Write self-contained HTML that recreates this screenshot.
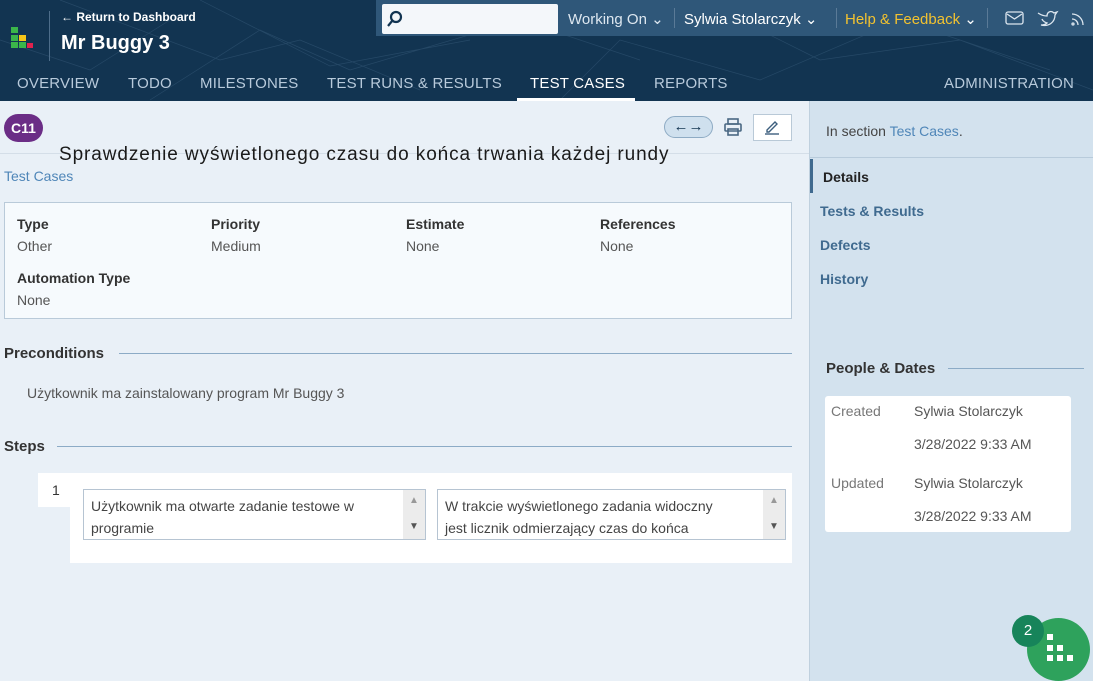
<!DOCTYPE html>
<html><head><meta charset="utf-8"><style>
*{margin:0;padding:0;box-sizing:border-box}
body{width:1093px;height:681px;overflow:hidden;background:#e9f0f7;font-family:"Liberation Sans","Noto Sans CJK SC",sans-serif;position:relative;color:#333}
.a{position:absolute;white-space:nowrap}
#hdr{position:absolute;left:0;top:0;width:1093px;height:101px;background:#123451}
#topbar{position:absolute;left:376px;top:0;width:717px;height:36px;background:#2f5779}
.nav{color:#b8cadb;font-size:15px;letter-spacing:.2px;top:75px}
.lbl{font-size:14px;font-weight:bold;color:#333}
.val{font-size:14px;color:#555}
.sec{font-size:15px;font-weight:bold;color:#333}
.line{position:absolute;height:1px;background:#8cabc6}
.side{font-size:14px;font-weight:bold;color:#3f6a8f}
.ta{position:absolute;background:#fff;border:1px solid #b6c4d2;font-size:14px;color:#444;line-height:22px;padding:5px 34px 0 7px;white-space:normal}
.sb{position:absolute;right:0;top:0;width:22px;height:100%;background:#ececec;color:#555;font-size:10px;text-align:center;line-height:12px}
</style></head><body>
<div id="hdr">
<svg width="1093" height="101" style="position:absolute;left:0;top:0;opacity:.18" stroke="#7ea5c8" stroke-width=".7" fill="none"><path d="M60 0L220 60L300 40L420 90M150 100L260 30L350 70L520 20L640 60M200 0L330 66L470 40M560 100L620 40L760 80L900 20L1050 70M700 0L820 60L960 40L1093 90M0 40L90 70L170 20"/></svg>
<div id="topbar"></div>
<div class="a" style="left:11px;top:27px;width:7px;height:6px;background:#3bb54a"></div>
<div class="a" style="left:11px;top:35px;width:7px;height:6px;background:#3bb54a"></div>
<div class="a" style="left:19px;top:35px;width:7px;height:6px;background:#f5c518"></div>
<div class="a" style="left:11px;top:42px;width:7px;height:6px;background:#3bb54a"></div>
<div class="a" style="left:19px;top:42px;width:7px;height:6px;background:#3bb54a"></div>
<div class="a" style="left:27px;top:43px;width:6px;height:5px;background:#e0224e"></div>
<div class="a" style="left:49px;top:11px;width:1px;height:50px;background:#4d6d8a"></div>
<div class="a" style="left:61px;top:10px;color:#fff;font-size:12px;font-weight:bold">← Return to Dashboard</div>
<div class="a" style="left:61px;top:32px;color:#fff;font-size:20px;font-weight:bold">Mr Buggy 3</div>
<div class="a" style="left:382px;top:4px;width:176px;height:30px;background:#f4f7fa;border-radius:2px"></div>
<svg class="a" style="left:386px;top:10px" width="18" height="18" fill="none" stroke="#123451" stroke-width="2.2"><circle cx="10" cy="7" r="5"/><path d="M6.5 10.5L2 16"/></svg>
<div class="a" style="left:568px;top:10px;color:#dde7f0;font-size:15px">Working On ⌄</div>
<div class="a" style="left:674px;top:8px;width:1px;height:20px;background:#5a7a97"></div>
<div class="a" style="left:684px;top:10px;color:#fff;font-size:15px">Sylwia Stolarczyk ⌄</div>
<div class="a" style="left:836px;top:8px;width:1px;height:20px;background:#5a7a97"></div>
<div class="a" style="left:845px;top:10px;color:#f2c230;font-size:15px">Help &amp; Feedback <span style="color:#fff">⌄</span></div>
<div class="a" style="left:987px;top:8px;width:1px;height:20px;background:#5a7a97"></div>
<svg class="a" style="left:1005px;top:9px" width="85" height="18" fill="none" stroke="#dce6ef" stroke-width="1.3"><rect x="1" y="3" width="17" height="12" rx="2"/><path d="M2 5l7.5 5 7.5-5"/><path d="M33 4c3 2 6 3 9 3 0-4 4-6 7-3l3-1-2 3c0 7-6 12-14 10 3 0 5-1 6-2-4-1-5-4-5-4"/><path d="M67 5a11 11 0 0 1 11 11M67 10a6 6 0 0 1 6 6"/><circle cx="68" cy="15" r="1"/></svg>
<div class="a nav" style="left:17px">OVERVIEW</div>
<div class="a nav" style="left:128px">TODO</div>
<div class="a nav" style="left:200px">MILESTONES</div>
<div class="a nav" style="left:327px">TEST RUNS &amp; RESULTS</div>
<div class="a nav" style="left:530px;color:#fff">TEST CASES</div>
<div class="a" style="left:517px;top:98px;width:118px;height:3px;background:#fff"></div>
<div class="a nav" style="left:654px">REPORTS</div>
<div class="a nav" style="left:944px">ADMINISTRATION</div>
</div>

<div class="a" style="left:809px;top:101px;width:284px;height:580px;background:#d3e2ee;border-left:1px solid #bfd0de"></div>

<div class="a" style="left:4px;top:114px;width:39px;height:28px;border-radius:14px;background:#6b2d86;color:#fff;font-weight:bold;font-size:14px;text-align:center;line-height:28px">C11</div>
<div class="a" style="left:0;top:153px;width:809px;height:1px;background:#d4dee8"></div>
<div class="a" style="left:664px;top:116px;width:49px;height:22px;border-radius:11px;background:#cfe0ee;border:1px solid #8eabc4;color:#123451;font-size:15px;font-weight:bold;text-align:center;line-height:19px">←→</div>
<svg class="a" style="left:723px;top:117px" width="20" height="20" fill="none" stroke="#4a6883" stroke-width="1.6"><rect x="5" y="2" width="10" height="5"/><rect x="2" y="7" width="16" height="7" rx="1"/><rect x="5" y="12" width="10" height="6"/></svg>
<div class="a" style="left:753px;top:114px;width:39px;height:27px;background:#fff;border:1px solid #b9c9d7"></div>
<svg class="a" style="left:763px;top:119px" width="18" height="16" fill="none" stroke="#3d5f7e" stroke-width="1.4"><path d="M4 11l8-8 2 2-8 8H4z"/><path d="M2 15h14"/></svg>
<div class="a" style="left:59px;top:144px;font-size:19px;color:#1a1a1a;letter-spacing:.9px">Sprawdzenie wyświetlonego czasu do końca trwania każdej rundy</div>
<div class="a" style="left:4px;top:168px;font-size:14px;color:#4f86b8">Test Cases</div>

<div class="a" style="left:4px;top:202px;width:788px;height:117px;background:#f6fafd;border:1px solid #b9cad9"></div>
<div class="a lbl" style="left:17px;top:216px">Type</div><div class="a val" style="left:17px;top:238px">Other</div>
<div class="a lbl" style="left:211px;top:216px">Priority</div><div class="a val" style="left:211px;top:238px">Medium</div>
<div class="a lbl" style="left:406px;top:216px">Estimate</div><div class="a val" style="left:406px;top:238px">None</div>
<div class="a lbl" style="left:600px;top:216px">References</div><div class="a val" style="left:600px;top:238px">None</div>
<div class="a lbl" style="left:17px;top:270px">Automation Type</div><div class="a val" style="left:17px;top:292px">None</div>

<div class="a sec" style="left:4px;top:345px">Preconditions</div>
<div class="line" style="left:119px;top:353px;width:673px"></div>
<div class="a val" style="left:27px;top:385px">Użytkownik ma zainstalowany program Mr Buggy 3</div>

<div class="a sec" style="left:4px;top:438px">Steps</div>
<div class="line" style="left:57px;top:446px;width:735px"></div>
<div class="a" style="left:38px;top:473px;width:40px;height:34px;background:#fff"></div>
<div class="a" style="left:70px;top:473px;width:722px;height:90px;background:#fff"></div>
<div class="a" style="left:52px;top:482px;font-size:14px;color:#333">1</div>
<div class="ta" style="left:83px;top:489px;width:343px;height:51px">Użytkownik ma otwarte zadanie testowe w programie<div class="sb"><div style="margin-top:5px;color:#999">▲</div><div style="margin-top:14px">▼</div></div></div>
<div class="ta" style="left:437px;top:489px;width:349px;height:51px;padding-right:50px">W trakcie wyświetlonego zadania widoczny jest licznik odmierzający czas do końca<div class="sb"><div style="margin-top:5px;color:#999">▲</div><div style="margin-top:14px">▼</div></div></div>

<div class="a" style="left:826px;top:123px;font-size:14px;color:#444">In section <span style="color:#4f86b8">Test Cases</span>.</div>
<div class="a" style="left:810px;top:157px;width:283px;height:1px;background:#b8cbdb"></div>
<div class="a" style="left:810px;top:159px;width:3px;height:34px;background:#3f6a8f"></div>
<div class="a side" style="left:823px;top:169px;color:#222">Details</div>
<div class="a side" style="left:820px;top:203px">Tests &amp; Results</div>
<div class="a side" style="left:820px;top:237px">Defects</div>
<div class="a side" style="left:820px;top:271px">History</div>
<div class="a sec" style="left:826px;top:360px">People &amp; Dates</div>
<div class="line" style="left:948px;top:368px;width:136px"></div>
<div class="a" style="left:825px;top:396px;width:246px;height:136px;background:#fff;border-radius:3px"></div>
<div class="a val" style="left:831px;top:403px;color:#777">Created</div><div class="a val" style="left:914px;top:403px">Sylwia Stolarczyk</div>
<div class="a val" style="left:914px;top:436px">3/28/2022 9:33 AM</div>
<div class="a val" style="left:831px;top:475px;color:#777">Updated</div><div class="a val" style="left:914px;top:475px">Sylwia Stolarczyk</div>
<div class="a val" style="left:914px;top:508px">3/28/2022 9:33 AM</div>

<div class="a" style="left:1027px;top:618px;width:63px;height:63px;border-radius:50%;background:#2ea25c"></div>
<div class="a" style="left:1047px;top:634px;width:6px;height:6px;background:#fff"></div>
<div class="a" style="left:1047px;top:645px;width:6px;height:6px;background:#fff"></div>
<div class="a" style="left:1057px;top:645px;width:6px;height:6px;background:#fff"></div>
<div class="a" style="left:1047px;top:655px;width:6px;height:6px;background:#fff"></div>
<div class="a" style="left:1057px;top:655px;width:6px;height:6px;background:#fff"></div>
<div class="a" style="left:1067px;top:655px;width:6px;height:6px;background:#fff"></div>
<div class="a" style="left:1012px;top:615px;width:32px;height:32px;border-radius:50%;background:#17845a;color:#fff;font-size:15px;text-align:center;line-height:32px">2</div>
</body></html>
